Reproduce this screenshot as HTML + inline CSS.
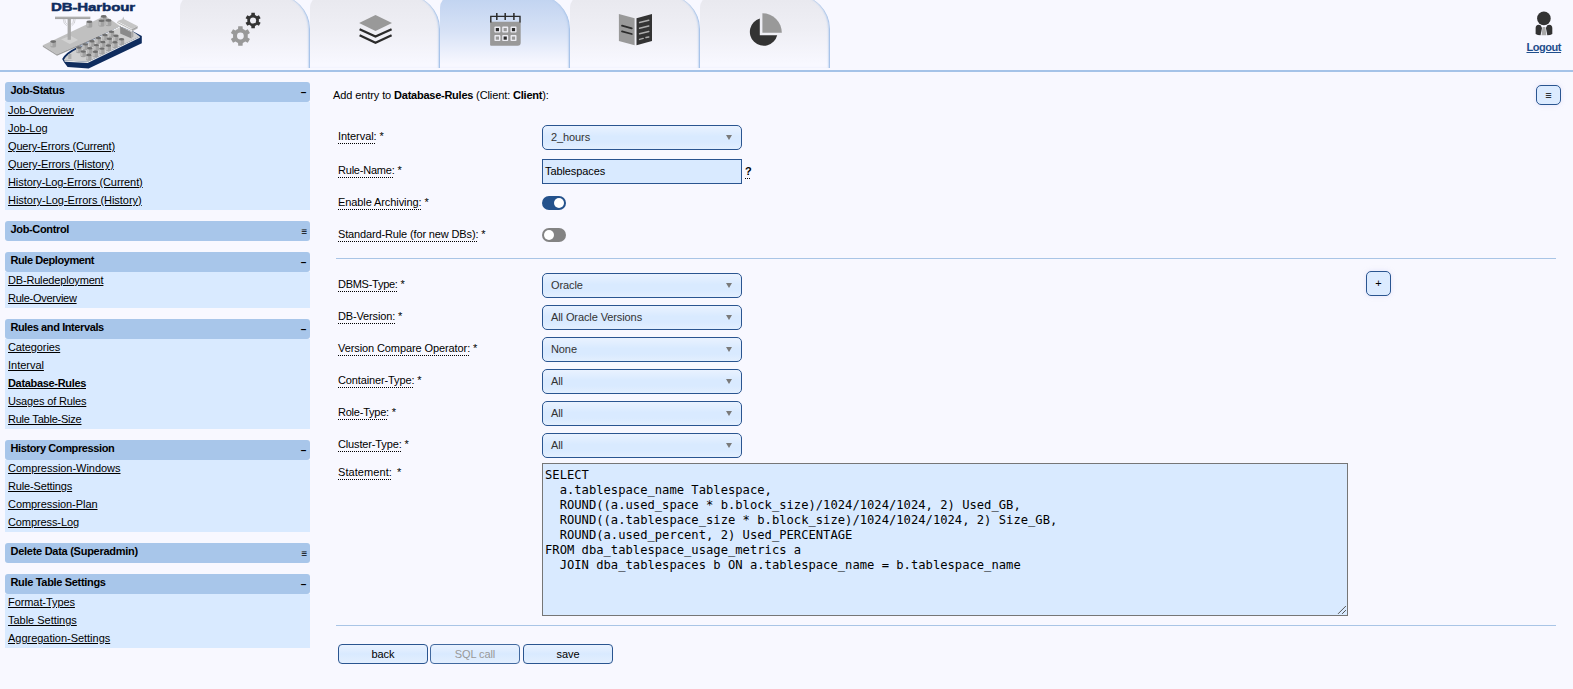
<!DOCTYPE html>
<html lang="en">
<head>
<meta charset="utf-8">
<title>DB-Harbour</title>
<style>
*{box-sizing:border-box;}
html,body{margin:0;padding:0;}
body{width:1573px;height:689px;overflow:hidden;background:#f8f8ff;font-family:"Liberation Sans",sans-serif;font-size:11px;color:#000;position:relative;letter-spacing:-0.1px;}
b,.bd{letter-spacing:-0.25px;}
a{color:#000;text-decoration:underline;}
#hdr{position:absolute;left:0;top:0;width:1573px;height:72px;border-bottom:2px solid #a5c3e8;}
.tab{position:absolute;top:-5px;height:73px;width:130px;border-right:1px solid #a9c4e9;border-radius:13px 34px 0 0;box-shadow:inset -1.5px 0 1.5px -0.5px rgba(169,196,233,.55);background:linear-gradient(#e8e8ee 0%,#efeff5 50%,#f8f8ff 95%);}
.tab.act{background:linear-gradient(#bfd2f0 0%,#d7e2f6 50%,#f8f8ff 95%);}
.tab svg{position:absolute;}
#logout{position:absolute;left:1526.5px;top:41px;letter-spacing:-0.45px;font-weight:bold;color:#1f4e8c;text-decoration:underline;font-size:11px;}
/* sidebar */
#side{position:absolute;left:5px;top:82px;width:305px;}
.mh{height:20px;background:#a8c6ea;border-radius:3px;font-weight:bold;letter-spacing:-0.25px;padding:1px 0 0 5.5px;position:relative;line-height:14px;}
.mh i{position:absolute;right:3px;top:4px;font-style:normal;font-weight:bold;font-size:10px;}
.mh i.d{right:4px;}
.mb{background:#d9eaff;margin:0;padding:0;}
.mb a{display:block;height:18px;line-height:16px;padding-left:3px;white-space:nowrap;}
.mb a span{text-decoration:underline;}
.mg{height:11px;}
/* main */
#title{position:absolute;left:333px;top:89px;white-space:nowrap;}
.lbl{position:absolute;left:338px;white-space:nowrap;height:14px;line-height:14px;}
.lbl u{text-decoration:underline dotted;text-underline-offset:3px;text-decoration-skip-ink:none;text-decoration-thickness:1px;}
.sel{position:absolute;left:542px;width:200px;height:25px;border:1px solid #2a5590;border-radius:5px;background:linear-gradient(#e9f2ff 0%,#d9eaff 45%,#d9eaff 70%,#e3effe 100%);color:#333;line-height:23px;padding-left:8px;}
.sel:after{content:"";position:absolute;right:9px;top:8.7px;border-left:3.6px solid transparent;border-right:3.6px solid transparent;border-top:5.3px solid #7a7a7a;}
.inp{position:absolute;left:542px;width:200px;height:25px;border:1px solid #2a5590;background:#d9eaff;line-height:23px;padding-left:2px;}
.tog{position:absolute;left:542px;width:24px;height:14px;border-radius:7px;}
.tog b{position:absolute;top:2px;width:10px;height:10px;border-radius:5px;background:#fff;}
.hr{position:absolute;left:336px;width:1220px;height:1px;background:#a9c5e6;}
#ta{position:absolute;left:542px;top:463px;width:806px;height:153px;border:1px solid #767676;background:#d9eaff;padding:3.5px 2px 2px 2px;letter-spacing:0;font-family:"DejaVu Sans Mono","Liberation Mono",monospace;font-size:12.17px;line-height:15px;white-space:pre;overflow:hidden;margin:0;}
.btn{position:absolute;top:644px;height:20px;width:90px;border:1px solid #2a5590;border-radius:4px;background:linear-gradient(#e9f2ff,#d9eaff 50%,#e3effe);text-align:center;line-height:18px;color:#000;}
.sbtn{position:absolute;width:25px;border:1px solid #2a5590;border-radius:5px;background:#dcebff;text-align:center;font-size:11px;letter-spacing:0;box-shadow:0 0 5px rgba(190,190,235,.35);}
</style>
</head>
<body>
<div id="hdr">
<!--LOGO-->
<div class="tab" style="left:180px"><!--ICON1--></div>
<div class="tab" style="left:310px"><!--ICON2--></div>
<div class="tab act" style="left:440px"><!--ICON3--></div>
<div class="tab" style="left:570px"><!--ICON4--></div>
<div class="tab" style="left:700px"><!--ICON5--></div>
<!--SVGSTART--><svg id="hsvg" width="1573" height="70" viewBox="0 0 1573 70" style="position:absolute;left:0;top:0;pointer-events:none">
<g><text x="51" y="11" textLength="84" lengthAdjust="spacingAndGlyphs" font-family="Liberation Sans, sans-serif" font-weight="bold" font-size="11.8" fill="#0f2c5e" stroke="#0f2c5e" stroke-width="0.5">DB-Harbour</text><polygon points="42.8,45.3 105,15.8 120.5,26.3 57,54.2" fill="#c0c0c0"/><polygon points="42.8,45.3 57,54.2 57,55.7 42.8,46.8" fill="#a2a2a2"/><polygon points="57,54.2 120.5,26.3 120.5,27.8 57,55.7" fill="#9c9c9c"/><polygon points="61.1,39.2 70.6,35.8 78.1,40.1 69.8,44" fill="#d2d2d2"/><rect x="67.6" y="18" width="3.3" height="21.8" fill="#a8a8a8"/><rect x="55" y="16.8" width="35.3" height="2.3" fill="#a4a4a4"/><path d="M55 17 H90.3" stroke="#c8c8c8" stroke-width="0.6"/><path d="M63.3 19.2 Q63.3 24 66.8 25.8 M64.8 19.2 Q65 23 67.2 24.5 M75.2 19.2 Q75.2 24 71.7 25.8 M73.7 19.2 Q73.5 23 71.3 24.5" stroke="#8c8c8c" stroke-width="0.35" fill="none"/><path d="M50.30 41.60 v4.60 a2.90 1.32 0 0 0 5.80 0 v-4.60 z" fill="#a2a2a2"/><path d="M50.30 41.60 v4.60 a2.90 1.32 0 0 0 2.20 0 v-4.60 z" fill="#bdbdbd"/><ellipse cx="53.20" cy="41.60" rx="2.90" ry="1.32" fill="#6e6e6e"/><path d="M86.50 21.80 v4.60 a2.90 1.32 0 0 0 5.80 0 v-4.60 z" fill="#a2a2a2"/><path d="M86.50 21.80 v4.60 a2.90 1.32 0 0 0 2.20 0 v-4.60 z" fill="#bdbdbd"/><ellipse cx="89.40" cy="21.80" rx="2.90" ry="1.32" fill="#6e6e6e"/><path d="M100.80 16.40 v4.60 a2.90 1.32 0 0 0 5.80 0 v-4.60 z" fill="#a2a2a2"/><path d="M100.80 16.40 v4.60 a2.90 1.32 0 0 0 2.20 0 v-4.60 z" fill="#bdbdbd"/><ellipse cx="103.70" cy="16.40" rx="2.90" ry="1.32" fill="#6e6e6e"/><path d="M98.60 20.80 v4.60 a2.90 1.32 0 0 0 5.80 0 v-4.60 z" fill="#a2a2a2"/><path d="M98.60 20.80 v4.60 a2.90 1.32 0 0 0 2.20 0 v-4.60 z" fill="#bdbdbd"/><ellipse cx="101.50" cy="20.80" rx="2.90" ry="1.32" fill="#6e6e6e"/><path d="M105.60 20.40 v4.60 a2.90 1.32 0 0 0 5.80 0 v-4.60 z" fill="#a2a2a2"/><path d="M105.60 20.40 v4.60 a2.90 1.32 0 0 0 2.20 0 v-4.60 z" fill="#bdbdbd"/><ellipse cx="108.50" cy="20.40" rx="2.90" ry="1.32" fill="#6e6e6e"/><path d="M62.2 59 Q65 52.8 77.2 47 L120 26.4 L133.3 31.6 L141.8 36 L141.8 43.2 L88.6 68.6 L67.6 67 L64.2 62.5 Z" fill="#0f2c5e"/><path d="M64 59.6 Q67.2 53.6 78.5 48.2 L120 26.6 L133.3 31.8 L139.8 36.6 L87.6 61.8 L64.4 60.6 Z" fill="#cfcfcf"/><path d="M64.4 60.6 L87.6 61.8 L139.8 36.6 L139.8 37.7 L87.7 63 L64.7 61.7 Z" fill="#e6e6e6"/><path d="M76.5 48.2 L119.6 27" stroke="#fafafa" stroke-width="0.9" fill="none"/><rect x="68.2" y="54" width="3.2" height="5" fill="#adadad"/><path d="M108.80 31.80 v4.60 a2.70 1.23 0 0 0 5.40 0 v-4.60 z" fill="#a2a2a2"/><path d="M108.80 31.80 v4.60 a2.70 1.23 0 0 0 2.05 0 v-4.60 z" fill="#bdbdbd"/><ellipse cx="111.50" cy="31.80" rx="2.70" ry="1.23" fill="#6e6e6e"/><path d="M102.27 34.94 v4.60 a2.70 1.23 0 0 0 5.40 0 v-4.60 z" fill="#a2a2a2"/><path d="M102.27 34.94 v4.60 a2.70 1.23 0 0 0 2.05 0 v-4.60 z" fill="#bdbdbd"/><ellipse cx="104.97" cy="34.94" rx="2.70" ry="1.23" fill="#6e6e6e"/><path d="M95.74 38.08 v4.60 a2.70 1.23 0 0 0 5.40 0 v-4.60 z" fill="#a2a2a2"/><path d="M95.74 38.08 v4.60 a2.70 1.23 0 0 0 2.05 0 v-4.60 z" fill="#bdbdbd"/><ellipse cx="98.44" cy="38.08" rx="2.70" ry="1.23" fill="#6e6e6e"/><path d="M89.21 41.22 v4.60 a2.70 1.23 0 0 0 5.40 0 v-4.60 z" fill="#a2a2a2"/><path d="M89.21 41.22 v4.60 a2.70 1.23 0 0 0 2.05 0 v-4.60 z" fill="#bdbdbd"/><ellipse cx="91.91" cy="41.22" rx="2.70" ry="1.23" fill="#6e6e6e"/><path d="M82.68 44.36 v4.60 a2.70 1.23 0 0 0 5.40 0 v-4.60 z" fill="#a2a2a2"/><path d="M82.68 44.36 v4.60 a2.70 1.23 0 0 0 2.05 0 v-4.60 z" fill="#bdbdbd"/><ellipse cx="85.38" cy="44.36" rx="2.70" ry="1.23" fill="#6e6e6e"/><path d="M76.15 47.50 v4.60 a2.70 1.23 0 0 0 5.40 0 v-4.60 z" fill="#a2a2a2"/><path d="M76.15 47.50 v4.60 a2.70 1.23 0 0 0 2.05 0 v-4.60 z" fill="#bdbdbd"/><ellipse cx="78.85" cy="47.50" rx="2.70" ry="1.23" fill="#6e6e6e"/><path d="M113.20 35.70 v4.60 a2.70 1.23 0 0 0 5.40 0 v-4.60 z" fill="#a2a2a2"/><path d="M113.20 35.70 v4.60 a2.70 1.23 0 0 0 2.05 0 v-4.60 z" fill="#bdbdbd"/><ellipse cx="115.90" cy="35.70" rx="2.70" ry="1.23" fill="#6e6e6e"/><path d="M106.67 38.84 v4.60 a2.70 1.23 0 0 0 5.40 0 v-4.60 z" fill="#a2a2a2"/><path d="M106.67 38.84 v4.60 a2.70 1.23 0 0 0 2.05 0 v-4.60 z" fill="#bdbdbd"/><ellipse cx="109.37" cy="38.84" rx="2.70" ry="1.23" fill="#6e6e6e"/><path d="M100.14 41.98 v4.60 a2.70 1.23 0 0 0 5.40 0 v-4.60 z" fill="#a2a2a2"/><path d="M100.14 41.98 v4.60 a2.70 1.23 0 0 0 2.05 0 v-4.60 z" fill="#bdbdbd"/><ellipse cx="102.84" cy="41.98" rx="2.70" ry="1.23" fill="#6e6e6e"/><path d="M93.61 45.12 v4.60 a2.70 1.23 0 0 0 5.40 0 v-4.60 z" fill="#a2a2a2"/><path d="M93.61 45.12 v4.60 a2.70 1.23 0 0 0 2.05 0 v-4.60 z" fill="#bdbdbd"/><ellipse cx="96.31" cy="45.12" rx="2.70" ry="1.23" fill="#6e6e6e"/><path d="M87.08 48.26 v4.60 a2.70 1.23 0 0 0 5.40 0 v-4.60 z" fill="#a2a2a2"/><path d="M87.08 48.26 v4.60 a2.70 1.23 0 0 0 2.05 0 v-4.60 z" fill="#bdbdbd"/><ellipse cx="89.78" cy="48.26" rx="2.70" ry="1.23" fill="#6e6e6e"/><path d="M80.55 51.40 v4.60 a2.70 1.23 0 0 0 5.40 0 v-4.60 z" fill="#a2a2a2"/><path d="M80.55 51.40 v4.60 a2.70 1.23 0 0 0 2.05 0 v-4.60 z" fill="#bdbdbd"/><ellipse cx="83.25" cy="51.40" rx="2.70" ry="1.23" fill="#6e6e6e"/><path d="M118.80 39.20 v4.60 a2.70 1.23 0 0 0 5.40 0 v-4.60 z" fill="#a2a2a2"/><path d="M118.80 39.20 v4.60 a2.70 1.23 0 0 0 2.05 0 v-4.60 z" fill="#bdbdbd"/><ellipse cx="121.50" cy="39.20" rx="2.70" ry="1.23" fill="#6e6e6e"/><path d="M112.27 42.34 v4.60 a2.70 1.23 0 0 0 5.40 0 v-4.60 z" fill="#a2a2a2"/><path d="M112.27 42.34 v4.60 a2.70 1.23 0 0 0 2.05 0 v-4.60 z" fill="#bdbdbd"/><ellipse cx="114.97" cy="42.34" rx="2.70" ry="1.23" fill="#6e6e6e"/><path d="M105.74 45.48 v4.60 a2.70 1.23 0 0 0 5.40 0 v-4.60 z" fill="#a2a2a2"/><path d="M105.74 45.48 v4.60 a2.70 1.23 0 0 0 2.05 0 v-4.60 z" fill="#bdbdbd"/><ellipse cx="108.44" cy="45.48" rx="2.70" ry="1.23" fill="#6e6e6e"/><path d="M99.21 48.62 v4.60 a2.70 1.23 0 0 0 5.40 0 v-4.60 z" fill="#a2a2a2"/><path d="M99.21 48.62 v4.60 a2.70 1.23 0 0 0 2.05 0 v-4.60 z" fill="#bdbdbd"/><ellipse cx="101.91" cy="48.62" rx="2.70" ry="1.23" fill="#6e6e6e"/><path d="M92.68 51.76 v4.60 a2.70 1.23 0 0 0 5.40 0 v-4.60 z" fill="#a2a2a2"/><path d="M92.68 51.76 v4.60 a2.70 1.23 0 0 0 2.05 0 v-4.60 z" fill="#bdbdbd"/><ellipse cx="95.38" cy="51.76" rx="2.70" ry="1.23" fill="#6e6e6e"/><path d="M86.15 54.90 v4.60 a2.70 1.23 0 0 0 5.40 0 v-4.60 z" fill="#a2a2a2"/><path d="M86.15 54.90 v4.60 a2.70 1.23 0 0 0 2.05 0 v-4.60 z" fill="#bdbdbd"/><ellipse cx="88.85" cy="54.90" rx="2.70" ry="1.23" fill="#6e6e6e"/><polygon points="120.2,26.6 131.5,32.2 131.5,38.4 120.2,33.6" fill="#8a8a8a"/><polygon points="131.5,32.6 133.4,31.6 133.4,36.8 131.5,38" fill="#a8a8a8"/><polygon points="117.2,21.3 123.3,18.7 137.6,26.1 132,29" fill="#c6c6c6"/><polygon points="117.2,21.3 132,29 132,31.4 117.2,23.9" fill="#f0f0f0"/><polygon points="132,29 137.6,26.1 137.6,28.6 132,31.4" fill="#b8b8b8"/><path d="M117.2 22.3 L132 29.9 L137.6 27" stroke="#8a8a8a" stroke-width="0.5" fill="none"/><polygon points="122.4,19 123.3,16.6 124.2,19.3" fill="#c0c0c0"/></g>
<path fill="#333" fill-rule="evenodd" d="M254.95 15.00L254.82 12.79 L251.38 12.79 L251.25 15.00A5.80 5.80 0 0 0 249.26 16.15L247.28 15.15 L245.56 18.14 L247.41 19.35A5.80 5.80 0 0 0 247.41 21.65L245.56 22.86 L247.28 25.85 L249.26 24.85A5.80 5.80 0 0 0 251.25 26.00L251.38 28.21 L254.82 28.21 L254.95 26.00A5.80 5.80 0 0 0 256.94 24.85L258.92 25.85 L260.64 22.86 L258.79 21.65A5.80 5.80 0 0 0 258.79 19.35L260.64 18.14 L258.92 15.15 L256.94 16.15A5.80 5.80 0 0 0 254.95 15.00 ZM250.00 20.50 a3.10 3.10 0 1 0 6.20 0 a3.10 3.10 0 1 0 -6.20 0Z"/>
<path fill="#999" fill-rule="evenodd" d="M242.76 28.99L242.58 26.24 L238.22 26.24 L238.04 28.99A7.40 7.40 0 0 0 235.51 30.45L233.04 29.23 L230.86 33.01 L233.15 34.54A7.40 7.40 0 0 0 233.15 37.46L230.86 38.99 L233.04 42.77 L235.51 41.55A7.40 7.40 0 0 0 238.04 43.01L238.22 45.76 L242.58 45.76 L242.76 43.01A7.40 7.40 0 0 0 245.29 41.55L247.76 42.77 L249.94 38.99 L247.65 37.46A7.40 7.40 0 0 0 247.65 34.54L249.94 33.01 L247.76 29.23 L245.29 30.45A7.40 7.40 0 0 0 242.76 28.99 ZM237.00 36.00 a3.40 3.40 0 1 0 6.80 0 a3.40 3.40 0 1 0 -6.80 0Z"/>
<polygon points="359.1,23.1 375.5,15 392,23.1 375.5,30.9" fill="#999"/>
<path d="M359.6 29.2 L375.5 36.6 L391.6 29.2 M359.6 35.2 L375.5 42.7 L391.6 35.2" fill="none" stroke="#2b2b2b" stroke-width="2.3" stroke-linejoin="miter"/>
<path d="M490.1 21.8 H520.7 V42.7 a3 3 0 0 1 -3 3 H491.1 a1 1 0 0 1 -1 -1 Z" fill="#999"/>
<path d="M490.8 22.5 V16.4 H520 V22.5" fill="none" stroke="#2b2b2b" stroke-width="1.4"/>
<path d="M496.8 13.1 V19.9 M505.2 13.1 V19.9 M513.9 13.1 V19.9" stroke="#2b2b2b" stroke-width="1.5"/>
<rect x="494.40" y="26.60" width="6" height="6" rx="0.8" fill="#ececf2"/>
<rect x="495.80" y="28.00" width="3.2" height="3.2" fill="#2b2b2b"/>
<rect x="502.20" y="26.60" width="6" height="6" rx="0.8" fill="#ececf2"/>
<rect x="503.60" y="28.00" width="3.2" height="3.2" fill="#999"/>
<rect x="510.50" y="26.60" width="6" height="6" rx="0.8" fill="#ececf2"/>
<rect x="511.90" y="28.00" width="3.2" height="3.2" fill="#2b2b2b"/>
<rect x="494.40" y="35.10" width="6" height="6" rx="0.8" fill="#ececf2"/>
<rect x="495.80" y="36.50" width="3.2" height="3.2" fill="#999"/>
<rect x="502.20" y="35.10" width="6" height="6" rx="0.8" fill="#ececf2"/>
<rect x="503.60" y="36.50" width="3.2" height="3.2" fill="#2b2b2b"/>
<rect x="510.50" y="35.10" width="6" height="6" rx="0.8" fill="#ececf2"/>
<rect x="511.90" y="36.50" width="3.2" height="3.2" fill="#999"/>
<polygon points="618.9,13.9 634.6,18.3 634.6,45.3 618.9,40.9" fill="#999"/>
<path d="M622 25.7 L631.8 28.3 M622 31.4 L631.8 34" stroke="#2b2b2b" stroke-width="1.8" stroke-linecap="round"/>
<polygon points="636.5,18.3 652,13.9 652,40.9 636.5,45.3" fill="#333"/>
<path d="M639.6 22.6 L648.8 20.2 M639.6 28.3 L648.8 25.9 M639.6 33.8 L648.8 31.4 M639.6 39.4 L643.2 38.4 M646 37.6 L648.8 36.9" stroke="#adadad" stroke-width="1.5" stroke-linecap="round"/>
<path d="M759.80 18.47 A13.90 13.90 0 1 0 777.20 35.30 L759.80 35.30 Z" fill="#333"/>
<path d="M762.40 32.70 V13.30 A19.40 19.40 0 0 1 781.80 32.70 Z" fill="#999"/>
<circle cx="1543.9" cy="18.4" r="6.8" fill="#333"/>
<path d="M1535.6 34 V28 Q1535.6 25 1538.6 24.8 L1540.6 25.2 L1542 28 L1540.6 35.3 Q1537.5 35.3 1535.6 34 Z" fill="#333"/>
<path d="M1552.3 34 V28 Q1552.3 25 1549.3 24.8 L1547.3 25.2 L1545.9 28 L1547.3 35.3 Q1550.4 35.3 1552.3 34 Z" fill="#333"/>
<path d="M1542.6 27 H1545.3 L1546.4 35.3 H1541.5 Z" fill="#a8a8a8"/>
</svg><!--SVGEND-->
<a id="logout">Logout</a>
</div>

<div id="side">
<div class="mh" style="letter-spacing:-0.284px">Job-Status<i class="d">–</i></div>
<div class="mb"><a style="letter-spacing:-0.121px">Job-Overview</a><a style="letter-spacing:-0.009px">Job-Log</a><a style="letter-spacing:-0.169px">Query-Errors (Current)</a><a style="letter-spacing:-0.108px">Query-Errors (History)</a><a style="letter-spacing:-0.079px">History-Log-Errors (Current)</a><a style="letter-spacing:-0.027px">History-Log-Errors (History)</a></div>
<div class="mg"></div>
<div class="mh" style="letter-spacing:-0.348px">Job-Control<i>≡</i></div>
<div class="mg"></div>
<div class="mh" style="letter-spacing:-0.417px">Rule Deployment<i class="d">–</i></div>
<div class="mb"><a style="letter-spacing:-0.179px">DB-Ruledeployment</a><a style="letter-spacing:-0.272px">Rule-Overview</a></div>
<div class="mg"></div>
<div class="mh" style="letter-spacing:-0.399px">Rules and Intervals<i class="d">–</i></div>
<div class="mb"><a style="letter-spacing:-0.1px">Categories</a><a style="letter-spacing:-0.022px">Interval</a><a class="bd" style="letter-spacing:-0.325px;font-weight:bold">Database-Rules</a><a style="letter-spacing:-0.161px">Usages of Rules</a><a style="letter-spacing:-0.223px">Rule Table-Size</a></div>
<div class="mg"></div>
<div class="mh" style="letter-spacing:-0.392px">History Compression<i class="d">–</i></div>
<div class="mb"><a style="letter-spacing:-0.031px">Compression-Windows</a><a style="letter-spacing:-0.15px">Rule-Settings</a><a style="letter-spacing:-0.062px">Compression-Plan</a><a style="letter-spacing:-0.095px">Compress-Log</a></div>
<div class="mg"></div>
<div class="mh" style="letter-spacing:-0.27px">Delete Data (Superadmin)<i>≡</i></div>
<div class="mg"></div>
<div class="mh" style="letter-spacing:-0.325px">Rule Table Settings<i class="d">–</i></div>
<div class="mb"><a style="letter-spacing:-0.08px">Format-Types</a><a style="letter-spacing:-0.022px">Table Settings</a><a style="letter-spacing:-0.027px">Aggregation-Settings</a></div>
</div>

<div id="title">Add entry to <b>Database-Rules</b> (Client: <b>Client</b>):</div>
<div class="sbtn" style="left:1536px;top:85px;height:20px;line-height:18px;">≡</div>

<div class="lbl" style="top:129px;letter-spacing:-0.061px"><u>Interval:</u> *</div>
<div class="sel" style="top:125px">2_hours</div>
<div class="lbl" style="top:163px;letter-spacing:-0.211px"><u>Rule-Name:</u> *</div>
<div class="inp" style="top:159px">Tablespaces</div>
<div class="lbl" style="left:745px;top:164px;font-weight:bold"><u>?</u></div>
<div class="lbl" style="top:195px;letter-spacing:-0.092px"><u>Enable Archiving:</u> *</div>
<div class="tog" style="top:196px;background:#24528c"><b style="left:12px"></b></div>
<div class="lbl" style="top:227px;letter-spacing:-0.141px"><u>Standard-Rule (for new DBs):</u> *</div>
<div class="tog" style="top:228px;background:#838383"><b style="left:2px"></b></div>
<div class="hr" style="top:258px"></div>

<div class="lbl" style="top:277px;letter-spacing:-0.274px"><u>DBMS-Type:</u> *</div>
<div class="sel" style="top:273px">Oracle</div>
<div class="sbtn" style="left:1366px;top:271px;height:25px;line-height:23px;">+</div>
<div class="lbl" style="top:309px;letter-spacing:-0.141px"><u>DB-Version:</u> *</div>
<div class="sel" style="top:305px">All Oracle Versions</div>
<div class="lbl" style="top:341px;letter-spacing:-0.095px"><u>Version Compare Operator:</u> *</div>
<div class="sel" style="top:337px">None</div>
<div class="lbl" style="top:373px;letter-spacing:-0.13px"><u>Container-Type:</u> *</div>
<div class="sel" style="top:369px">All</div>
<div class="lbl" style="top:405px;letter-spacing:-0.228px"><u>Role-Type:</u> *</div>
<div class="sel" style="top:401px">All</div>
<div class="lbl" style="top:437px;letter-spacing:-0.143px"><u>Cluster-Type:</u> *</div>
<div class="sel" style="top:433px">All</div>
<div class="lbl" style="top:465px;letter-spacing:0.07px"><u>Statement:</u>&nbsp; <span style="margin-left:-1.2px">*</span></div>
<pre id="ta">SELECT
  a.tablespace_name Tablespace,
  ROUND((a.used_space * b.block_size)/1024/1024/1024, 2) Used_GB,
  ROUND((a.tablespace_size * b.block_size)/1024/1024/1024, 2) Size_GB,
  ROUND(a.used_percent, 2) Used_PERCENTAGE
FROM dba_tablespace_usage_metrics a
  JOIN dba_tablespaces b ON a.tablespace_name = b.tablespace_name</pre>
<svg width="12" height="12" viewBox="0 0 12 12" style="position:absolute;left:1335px;top:603px"><path d="M3.3 10.6 L10.6 3.3 M7.4 10.6 L10.6 7.4" stroke="#555" stroke-width="1" stroke-linecap="round" fill="none"/></svg>
<div class="hr" style="top:625px"></div>
<div class="btn" style="left:338px">back</div>
<div class="btn" style="left:430px;color:#999;border-color:#41699f">SQL call</div>
<div class="btn" style="left:523px">save</div>
</body>
</html>
